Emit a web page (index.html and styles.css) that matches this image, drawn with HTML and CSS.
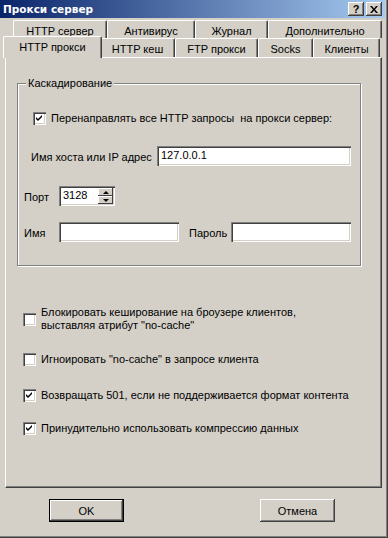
FILE: index.html
```html
<!DOCTYPE html>
<html lang="ru">
<head>
    <meta charset="UTF-8">
    <title>Прокси сервер</title>
    <link rel="stylesheet" href="styles.css">
</head>
<body>
    <div class="window">
        <div class="titlebar">
            <span class="title">Прокси сервер</span>
            <div class="caption-buttons">
                <div class="cap-btn help">?</div>
                <div class="cap-btn">
                    <svg width="8" height="7" viewBox="0 0 8 7">
                        <path d="M0 0h2l2 2.5L6 0h2L5 3.5 8 7H6L4 4.5 2 7H0l3-3.5z" fill="#000"/>
                    </svg>
                </div>
            </div>
        </div>

        <div class="tabs">
            <div class="tab-row back">
                <div class="tab">HTTP сервер</div>
                <div class="tab">Антивирус</div>
                <div class="tab">Журнал</div>
                <div class="tab">Дополнительно</div>
            </div>
            <div class="tab-row front">
                <div class="tab active">HTTP прокси</div>
                <div class="tab">HTTP кеш</div>
                <div class="tab">FTP прокси</div>
                <div class="tab">Socks</div>
                <div class="tab">Клиенты</div>
            </div>
        </div>

        <div class="panel">
            <fieldset class="group">
                <legend>Каскадирование</legend>

                <label class="check-row first">
                    <span class="check checked"></span>
                    <span>Перенаправлять все HTTP запросы&nbsp; на прокси сервер:</span>
                </label>

                <div class="field-row host">
                    <span class="field-label host-label">Имя хоста или IP адрес</span>
                    <div class="textbox host-box">127.0.0.1</div>
                </div>

                <div class="field-row port">
                    <span class="field-label short-label">Порт</span>
                    <div class="textbox spin">
                        <span class="spin-value">3128</span>
                        <div class="spin-buttons">
                            <div class="spin-btn"><span class="arrow up"></span></div>
                            <div class="spin-btn"><span class="arrow down"></span></div>
                        </div>
                    </div>
                </div>

                <div class="field-row login">
                    <span class="field-label short-label">Имя</span>
                    <div class="textbox name-box"></div>
                    <span class="field-label pass-label">Пароль</span>
                    <div class="textbox pass-box"></div>
                </div>
            </fieldset>

            <label class="check-row option two-lines">
                <span class="check"></span>
                <span>Блокировать кеширование на броузере клиентов,<br>выставляя атрибут "no-cache"</span>
            </label>
            <label class="check-row option second">
                <span class="check"></span>
                <span>Игноировать "no-cache" в запросе клиента</span>
            </label>
            <label class="check-row option third">
                <span class="check checked"></span>
                <span>Возвращать 501, если не поддерживается формат контента</span>
            </label>
            <label class="check-row option fourth">
                <span class="check checked"></span>
                <span>Принудительно использовать компрессию данных</span>
            </label>
        </div>

        <div class="footer">
            <div class="button default">OK</div>
            <div class="button cancel">Отмена</div>
        </div>
    </div>
</body>
</html>
```

FILE: styles.css
```css
* {
    box-sizing: border-box;
}

body {
    margin: 0;
    background: #d4d0c8;
    font-family: "Liberation Sans", Arial, sans-serif;
    font-size: 11px;
    color: #000;
}

.window {
    width: 388px;
    height: 538px;
    background: #d4d0c8;
    border-right: 1px solid #404040;
    border-bottom: 1px solid #404040;
    box-shadow: inset -1px -1px 0 #808080;
    padding-right: 2px;
}

/* title bar */
.titlebar {
    height: 18px;
    display: flex;
    align-items: center;
    justify-content: space-between;
    padding: 0 3px 0 3px;
    background: linear-gradient(to right, #0a246a, #a6caf0);
}

.title {
    color: #fff;
    font-family: "DejaVu Sans", sans-serif;
    font-weight: bold;
    font-size: 10.5px;
}

.caption-buttons {
    display: flex;
    gap: 2px;
}

.cap-btn {
    width: 16px;
    height: 14px;
    display: flex;
    align-items: center;
    justify-content: center;
    background: #d4d0c8;
    box-shadow: inset -1px -1px 0 #404040, inset 1px 1px 0 #fff, inset -2px -2px 0 #808080;
}

.cap-btn.help {
    font-weight: bold;
    font-size: 11px;
    line-height: 14px;
}

/* tabs */
.tabs {
    margin-top: 2px;
    position: relative;
    z-index: 1;
}

.tab-row {
    display: grid;
    height: 18px;
}

.tab-row.back {
    margin-left: 13px;
    grid-template-columns: 94px 88px 73px 114px;
}

.tab-row.back .tab {
    padding-top: 3px;
}

.tab-row.front {
    margin-left: 5px;
    height: 19px;
    grid-template-columns: 95px 75px 83px 55px 67px;
}

.tab {
    display: flex;
    align-items: center;
    justify-content: center;
    padding-top: 1px;
    background: #d4d0c8;
    border-top: 1px solid #fff;
    border-left: 1px solid #fff;
    border-right: 1px solid #404040;
    border-radius: 2px 2px 0 0;
    box-shadow: inset -1px 0 0 #808080;
    white-space: nowrap;
}

.tab.active {
    margin: -2px -2px -1px -2px;
    padding-bottom: 2px;
    position: relative;
}

/* page */
.panel {
    margin-left: 5px;
    width: 377px;
    height: 431px;
    padding: 0 0 0 11px;
    border-top: 1px solid #fff;
    border-left: 1px solid #fff;
    border-right: 1px solid #404040;
    border-bottom: 1px solid #404040;
    box-shadow: inset -1px -1px 0 #808080;
}

.group {
    margin: 18px 0 0 0;
    width: 344px;
    padding: 0 0 23px 0;
    border: 1px solid #808080;
    box-shadow: 1px 1px 0 #fff, inset 1px 1px 0 #fff;
}

.group legend {
    margin-left: 8px;
    padding: 0 2px;
    line-height: 14px;
    background: #d4d0c8;
}

.check-row {
    display: flex;
    align-items: center;
    gap: 5px;
    line-height: 13px;
}

.check-row.first {
    margin: 22px 0 0 15px;
}

.check {
    width: 13px;
    height: 13px;
    flex: none;
    background: #fff;
    box-shadow: inset 1px 1px 0 #808080, inset 2px 2px 0 #404040, inset -1px -1px 0 #fff, inset -2px -2px 0 #d4d0c8;
}

.check.checked {
    background: #fff url("data:image/svg+xml,%3Csvg xmlns='http://www.w3.org/2000/svg' width='13' height='13'%3E%3Cpath d='M3 5l2 2 4-4v2l-4 4-2-2z' fill='%23000'/%3E%3C/svg%3E") no-repeat;
}

.field-row {
    display: flex;
    align-items: center;
    height: 20px;
}

.field-row.host {
    margin: 21px 0 0 13px;
}

.field-row.port {
    margin: 20px 0 0 6px;
}

.field-row.login {
    margin: 16px 0 0 6px;
}

.field-label {
    flex: none;
    padding-top: 1px;
}

.host-label {
    width: 126px;
}

.short-label {
    width: 35px;
}

.pass-label {
    width: 42px;
    margin-left: 10px;
}

.textbox {
    height: 20px;
    background: #fff;
    padding: 3px 0 0 4px;
    box-shadow: inset 1px 1px 0 #808080, inset 2px 2px 0 #404040, inset -1px -1px 0 #fff, inset -2px -2px 0 #d4d0c8;
}

.host-box {
    width: 194px;
}

.name-box {
    width: 120px;
}

.pass-box {
    width: 120px;
}

.spin {
    width: 56px;
    display: flex;
    justify-content: space-between;
    padding: 2px 2px 2px 4px;
}

.spin-value {
    padding-top: 1px;
}

.spin-buttons {
    display: flex;
    flex-direction: column;
    width: 15px;
}

.spin-btn {
    flex: 1;
    display: flex;
    align-items: center;
    justify-content: center;
    background: #d4d0c8;
    box-shadow: inset -1px -1px 0 #404040, inset 1px 1px 0 #fff;
}

.arrow {
    width: 0;
    height: 0;
    border-left: 3px solid transparent;
    border-right: 3px solid transparent;
}

.arrow.up {
    border-bottom: 3px solid #000;
}

.arrow.down {
    border-top: 3px solid #000;
}

/* options below the group */
.check-row.option {
    margin-left: 6px;
}

.check-row.two-lines {
    margin-top: 40px;
}

.check-row.second {
    margin-top: 21px;
}

.check-row.third {
    margin-top: 23px;
}

.check-row.fourth {
    margin-top: 20px;
}

/* buttons */
.footer {
    display: flex;
    padding: 11px 0 0 49px;
}

.button {
    width: 75px;
    height: 23px;
    display: flex;
    align-items: center;
    justify-content: center;
    background: #d4d0c8;
    box-shadow: inset -1px -1px 0 #404040, inset 1px 1px 0 #fff, inset -2px -2px 0 #808080;
}

.button.default {
    border: 1px solid #000;
}

.button.cancel {
    margin-left: 136px;
}
```
